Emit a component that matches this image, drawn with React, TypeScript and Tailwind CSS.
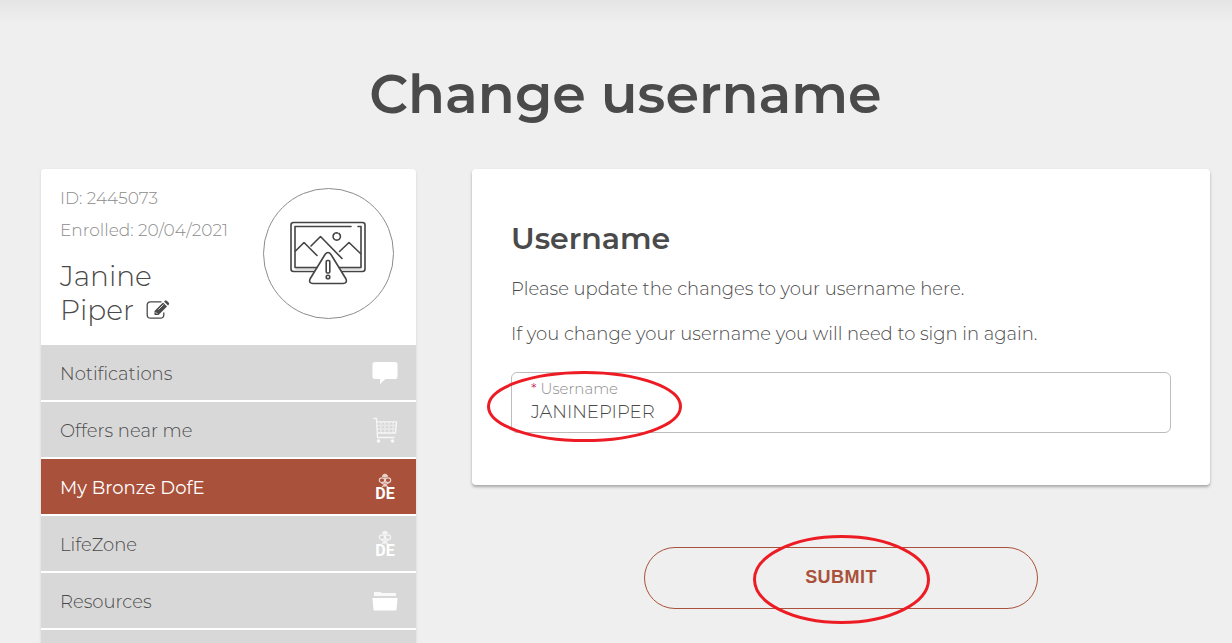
import { useState } from "react";
import type { FormEvent, ReactNode } from "react";

function BubbleIcon() {
    return (
        <svg viewBox="0 0 26 24" className="h-6 w-[26px]" fill="currentColor" aria-hidden="true">
            <path d="M3 1h20a2.500 2.500 0 0 1 2.500 2.500v12A2.500 2.500 0 0 1 23 18h-9.500l-5.500 5v-5H3a2.500 2.500 0 0 1-2.500-2.500v-12A2.500 2.500 0 0 1 3 1z" />
        </svg>
    );
}

function CartIcon() {
    return (
        <svg viewBox="0 0 26 26" className="h-[26px] w-[26px]" fill="none" stroke="currentColor" aria-hidden="true">
            <path d="M1.500 1.500H4.500L5.500 20.500H22.500" strokeWidth="1.300" opacity="0.800" />
            <path d="M5 4.800H24.500L23.500 16H5.500" strokeWidth="1.300" opacity="0.800" />
            <path d="M5 8.500H24.500M5 12H24M9 5V16M13 5V16M17 5V16M21 5V16" strokeWidth="1.500" opacity="0.450" />
            <circle cx="6.500" cy="24" r="1.800" fill="currentColor" stroke="none" opacity="0.850" />
            <circle cx="20.500" cy="24" r="1.800" fill="currentColor" stroke="none" opacity="0.850" />
        </svg>
    );
}

function AwardIcon() {
    return (
        <svg viewBox="0 0 24 34" className="h-[34px] w-6" fill="none" stroke="currentColor" aria-hidden="true">
            <g opacity="0.750">
                <path d="M9.500 6.500Q9 5 12 4Q15 5 14.500 6.500Z" fill="currentColor" strokeWidth="1" />
                <ellipse cx="9" cy="10.200" rx="2.700" ry="2.300" strokeWidth="1.200" />
                <ellipse cx="15" cy="10.200" rx="2.700" ry="2.300" strokeWidth="1.200" />
                <path d="M12 7V17M8 12.500L12 15L16 12.500M9 17L12 14.500L15 17" strokeWidth="1.200" />
            </g>
            <text x="12" y="29" textAnchor="middle" fill="currentColor" stroke="none" className="font-['Roboto','Liberation_Sans',sans-serif] text-[16px] font-bold">DE</text>
        </svg>
    );
}

function FolderIcon() {
    return (
        <svg viewBox="0 0 26 20" className="h-5 w-[26px]" fill="currentColor" aria-hidden="true">
            <path d="M2 5V1.500Q2 1 2.500 1H8.500Q9 1 9.300 2H23Q24 2 24 3V5Z" opacity="0.850" />
            <path d="M1 7H25Q25.600 7 25.500 8L24.500 18.500Q24.400 19.500 23.500 19.500H2.500Q1.600 19.500 1.500 18.500L.5 8Q.4 7 1 7Z" />
        </svg>
    );
}

function EditIcon() {
    return (
        <svg viewBox="0 0 24 20" className="h-5 w-6" fill="none" stroke="currentColor" aria-hidden="true">
            <path d="M15.500 1.800H4.500A3.300 3.300 0 0 0 1.200 5V15A3.300 3.300 0 0 0 4.500 18.200H14.500A3.300 3.300 0 0 0 17.800 15V12.500" strokeWidth="1.300" />
            <path d="M8.500 15V11L17 2.500L21 6.500L12.500 15Z" fill="currentColor" stroke="none" />
            <path d="M18 1.500L19.200.6Q20 .1 20.800.8L22.800 2.800Q23.500 3.600 22.900 4.400L22 5.500Z" fill="currentColor" stroke="none" />
            <path d="M9.600 12.200L11.400 14M12.500 9.500L17.500 4.500" stroke="white" strokeWidth="0.800" />
        </svg>
    );
}

function MissingPhoto() {
    return (
        <svg viewBox="0 0 78 64" className="mr-0.5 mb-0.5 h-16 w-[78px]" fill="none" stroke="#444" strokeWidth="1.600" strokeLinecap="round" strokeLinejoin="round" aria-hidden="true">
            <rect x="2" y="1.500" width="74" height="49" rx="2.500" />
            <path d="M6.500 47H71.500V50H6.500Z" fill="#ddd" stroke="none" />
            <path d="M62 5.500H6V46.500H72V5.500H69" />
            <path d="M6.500 30L15 21.500L28 34.500M22 25L31.500 15.500L53 37.500M50.500 30.500L60 21.500L71.500 32.500" />
            <path d="M45.500 12.500A3.700 3.700 0 1 0 50 12.500M46.500 12A3.700 3.700 0 0 1 48.500 12" />
            <path d="M36 33.500Q39 29.500 42 33.500L57 58Q58.500 62.500 54 62.500H24Q19.500 62.500 21 58Z" fill="white" />
            <rect x="37.200" y="39.500" width="3.600" height="12.500" rx="1.200" />
            <circle cx="39" cy="56" r="1.800" />
        </svg>
    );
}

const links: { label: string; icon: ReactNode; active?: boolean }[] = [
    { label: "Notifications", icon: <BubbleIcon /> },
    { label: "Offers near me", icon: <CartIcon /> },
    { label: "My Bronze DofE", icon: <AwardIcon />, active: true },
    { label: "LifeZone", icon: <AwardIcon /> },
    { label: "Resources", icon: <FolderIcon /> }
];

function Sidebar() {
    return (
        <aside className="w-[375px] shrink-0 rounded-t bg-white shadow">
            <div className="flex justify-between pt-[19px] pr-[22px] pb-[18px] pl-[19px]">
                <div className="text-[#4a4a4a]">
                    <p className="text-[17px] leading-5 font-light text-[#8c8c8c]">ID: 2445073</p>
                    <p className="mt-3 text-[17px] leading-5 font-light text-[#8c8c8c]">Enrolled: 20/04/2021</p>
                    <h2 className="mt-[19px] text-[28px] leading-[34px] font-light">
                        Janine
                        <span className="flex items-center gap-3">
                            Piper
                            <button type="button" aria-label="Edit name">
                                <EditIcon />
                            </button>
                        </span>
                    </h2>
                </div>
                <div className="flex h-[131px] w-[131px] items-center justify-center rounded-full border border-[#8c8c8c]">
                    <MissingPhoto />
                </div>
            </div>
            <nav>
                <ul className="space-y-0.5">
                    {links.map((link) => (
                        <li key={link.label}>
                            <a
                                href="#"
                                className={`flex h-[55px] items-center justify-between pr-[18px] pl-[19px] text-lg ${link.active ? "bg-[#a9513a] text-white" : "bg-[#d8d8d8] font-light text-[#4a4a4a]"}`}
                            >
                                <span className="pt-0.5">{link.label}</span>
                                <span className="flex w-[26px] justify-center text-white">{link.icon}</span>
                            </a>
                        </li>
                    ))}
                    <li className="h-[13px] bg-[#d8d8d8]" />
                </ul>
            </nav>
        </aside>
    );
}

export default function App() {
    const [username, setUsername] = useState("JANINEPIPER");

    const handleSubmit = (e: FormEvent) => {
        e.preventDefault();
    };

    return (
        <div className="min-h-screen bg-[#efefef] font-['Montserrat','Inter',sans-serif] text-[#4a4a4a]">
            <div className="h-6 bg-linear-to-b from-[#e5e5e5] to-[#efefef]" />
            <div className="pr-[22px] pl-[41px]">
                <h1 className="pt-8 pb-[37px] text-center text-[54px] leading-[76px] font-semibold">Change username</h1>

                <div className="flex items-start gap-14">
                    <Sidebar />

                    <form onSubmit={handleSubmit} className="min-w-0 flex-1">
                        <div className="rounded bg-white px-[39px] pt-[50px] pb-[52px] shadow-[0_2px_3px_rgba(0,0,0,0.3)]">
                            <h2 className="text-[30px] leading-10 font-semibold">Username</h2>
                            <p className="mt-4 text-lg leading-7 font-light">Please update the changes to your username here.</p>
                            <p className="mt-[17px] text-lg leading-7 font-light">If you change your username you will need to sign in again.</p>

                            <div className="relative mt-6 rounded-md border border-[#bdbdbd] px-[19px] pt-1.5 pb-2">
                                <label htmlFor="username" className="block text-[15px] leading-5 font-light text-[#8c8c8c]">
                                    <span className="text-[#c2185b]">*</span> Username
                                </label>
                                <input
                                    id="username"
                                    value={username}
                                    onChange={(e) => setUsername(e.target.value)}
                                    className="block h-[25px] w-full text-lg font-light outline-none"
                                />
                                <svg viewBox="0 0 196 74" className="pointer-events-none absolute -top-1 -left-[25px] h-[74px] w-[196px]" fill="none" aria-hidden="true">
                                    <ellipse cx="97.500" cy="37.500" rx="96" ry="34" stroke="#ed1c24" strokeWidth="3" />
                                </svg>
                            </div>
                        </div>

                        <div className="relative mx-auto mt-[62px] max-w-[394px]">
                            <button type="submit" className="h-[62px] w-full rounded-full border border-[#a9513a] pb-0.5 font-['Liberation_Sans',sans-serif] text-lg font-bold tracking-wide text-[#a9513a]">
                                SUBMIT
                            </button>
                            <div className="pointer-events-none absolute inset-0 flex items-center justify-center">
                                <svg viewBox="0 0 178 92" className="h-[92px] w-[178px] shrink-0" fill="none" aria-hidden="true">
                                    <ellipse cx="89.500" cy="47.500" rx="87" ry="43" stroke="#ed1c24" strokeWidth="3" />
                                </svg>
                            </div>
                        </div>
                    </form>
                </div>
            </div>
        </div>
    );
}
